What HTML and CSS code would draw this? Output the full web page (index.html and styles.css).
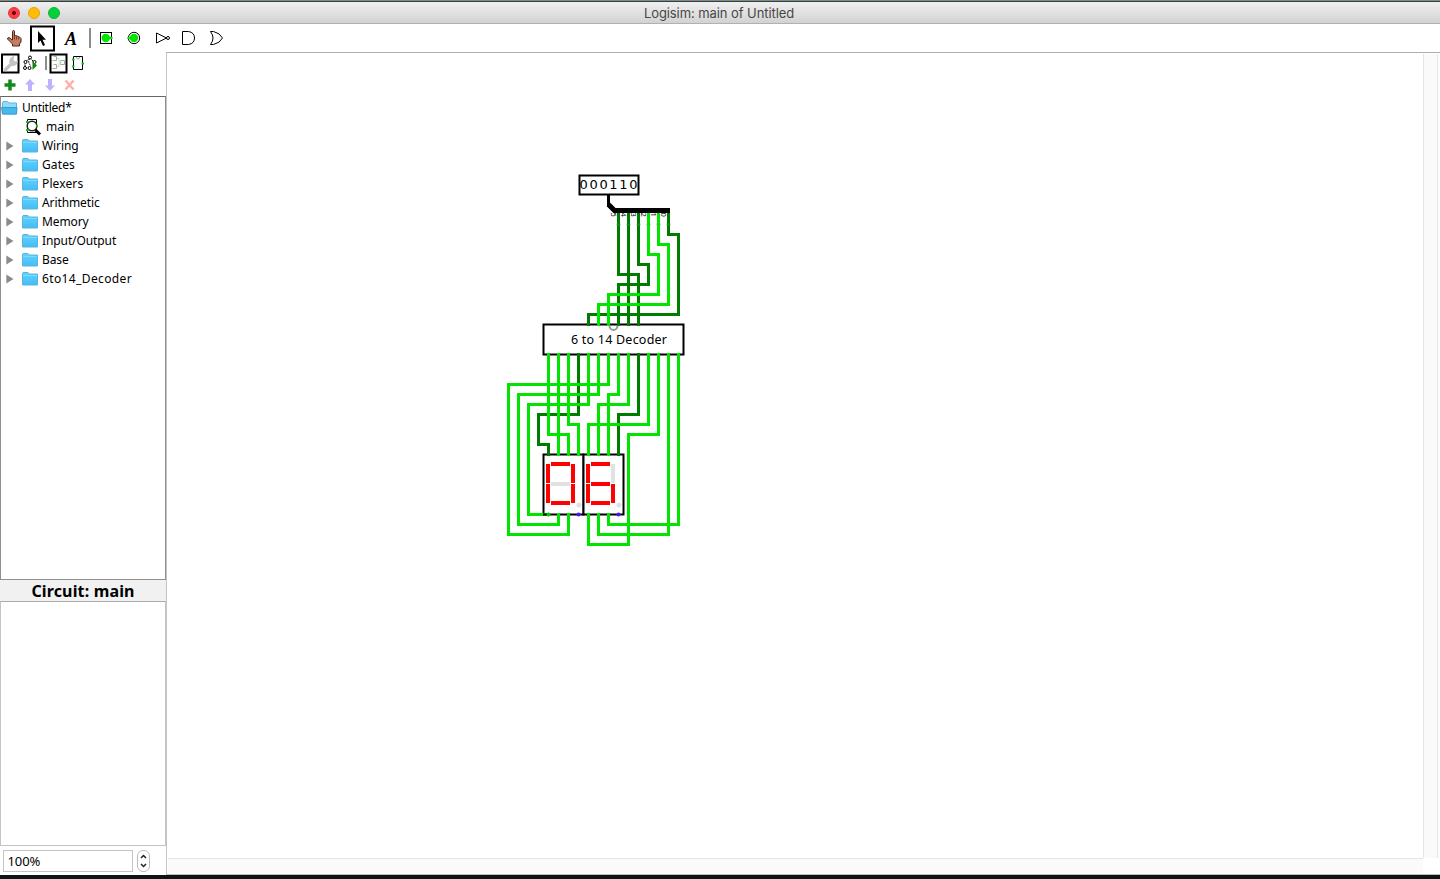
FILE: index.html
```html
<!DOCTYPE html>
<html lang="en">
<head>
<meta charset="utf-8">
<title>Logisim: main of Untitled</title>
<link rel="stylesheet" href="styles.css">
</head>
<body>
<svg class="defs" width="0" height="0">
  <defs>
    <linearGradient id="blue" x1="0" y1="0" x2="0" y2="1"><stop offset="0" stop-color="#62d2ff"/><stop offset="1" stop-color="#43bdf5"/></linearGradient>
    <symbol id="folder" viewBox="0 0 16 14"><path d="M.5 13V1.500l.5-1h5l1.500 1.500H15.500V13z" fill="url(#blue)" stroke="#5cb4dc"/><path d="M1 3.500h14" stroke="#7bdcff"/></symbol>
    <symbol id="tri" viewBox="0 0 8 10"><path d="M.3.500L7.500 5 .3 9.500z" fill="#8b8b8b"/></symbol>
  </defs>
</svg>
<header class="titlebar">
  <div class="lights"><i class="light red"></i><i class="light yellow"></i><i class="light green"></i></div>
  <h1 class="title"><span>Logisim: main of Untitled</span></h1>
</header>
<nav class="toolbar">
  <svg width="240" height="28" viewBox="0 24 240 28">
    <path d="M12.500 40V31.500q0-1 1-1t1 1V36l1-.5 1.500.5 1 .5 1.500.5 1.500 1.500v3.500l-1.500 2v2h-7v-2l-2.500-2.500-2.500-2.500q0-1.500 1.500-1.500z" fill="#c87d62" stroke="#4a261d"/>
    <path d="M14.500 36v3.500M16.500 36.500v3M18.500 37.500v2" stroke="#713e30"/>
    <rect x="31" y="26.500" width="23" height="24" fill="#fff" stroke="#000" stroke-width="2"/>
    <path d="M38 31V43l2.500-2.500 2.500 5.500 2-1-2.500-5.200H46z" fill="#000"/>
    <text class="letter" x="65" y="45">A</text>
    <path d="M90 28v20" stroke="#8c8c8c" stroke-width="2"/>
    <rect x="100.500" y="32.500" width="11" height="11" fill="#fff" stroke="#000"/>
    <circle cx="105.700" cy="38" r="4.200" fill="#00e600"/><path d="M106 38h5.500" stroke="#00e600" stroke-width="2.500" stroke-linecap="round"/>
    <circle cx="134" cy="38" r="5.700" fill="#fff" stroke="#000"/>
    <circle cx="134" cy="38" r="4.200" fill="#00e600"/><path d="M128.500 38h4" stroke="#00e600" stroke-width="2.500" stroke-linecap="round"/>
    <g fill="none" stroke="#000"><path d="M156.500 33v10l10-5z"/><circle cx="168" cy="38" r="1.500"/>
    <path d="M182.500 31.500h6q6 1 6 6.500t-6 6.500h-6z"/>
    <path d="M210.500 31.500q5 6.500 0 13h3q6.500-1.500 9-6.500-2.500-5-9-6.500z"/></g>
  </svg>
</nav>
<main class="workspace">
  <aside class="sidebar">
    <svg class="tools" width="166" height="44" viewBox="0 52 166 44">
      <rect x="2" y="54.500" width="16.500" height="18" fill="#fff" stroke="#000" stroke-width="2"/>
      <path d="M3.500 69l6-5.500q-1.500-5.500 5-8l-1.200 4 1.800 2 3-1q-1 6-6.500 5.500l-5.500 5.500q-2.500 0-2.600-2.500z" fill="#c3c3c3"/>
      <path d="M30 57.500l-5 5v6M30 58l5 5M30 58q-3 4 1 8" fill="none" stroke="#000" stroke-dasharray="2 1"/>
      <g fill="#fff" stroke="#000"><circle cx="30" cy="57.500" r="1.500"/><circle cx="25.500" cy="62" r="1.500"/><circle cx="34.500" cy="62" r="1.500"/><circle cx="25" cy="68" r="1.500"/><circle cx="29.500" cy="68" r="1.500"/></g>
      <path d="M32.500 61v9l4.500-4.500z" fill="#148514"/>
      <path d="M46 56v14" stroke="#8c8c8c" stroke-width="2"/>
      <rect x="50.500" y="54.500" width="16" height="18" fill="#fff" stroke="#000" stroke-width="2"/>
      <g fill="none" stroke="#a8a8a8"><path d="M53.500 56.500h3v4h-4M53.500 64.500h3v4h-4M60.500 60.500h4v4h-4z"/></g><path d="M57 58.500h2v3h2M57 66.500h2v-3h2" stroke="#b7edb7" fill="none"/>
      <path d="M73.500 56.500h9v13h-9z" fill="#fff" stroke="#000"/><path d="M76 57q2 4 4 0" stroke="#999" fill="none"/>
      <path d="M72 59.500h2.500M72 66.500h2.500M81.500 63.500h2.500" stroke="#00d000" stroke-width="2"/>
      <path d="M10 79.500v11M4.500 85h11" stroke="#108c18" stroke-width="3.500"/>
      <path d="M30 79l5 5.500h-3V91h-4v-6.500h-3zM50 91l-5-5.500h3V79h4v6.500h3z" fill="#bfb1fb"/>
      <path d="M65.500 80.500l8 9M73.500 80.500l-8 9" stroke="#ffb0ac" stroke-width="2.600"/>
    </svg>
    <ul class="tree">
      <li class="row root"><svg width="17" height="14" viewBox="0 0 17 14"><path d="M1.500 13V1.500l.5-1h4.500l1.500 1.500H15.500V13z" fill="#8fdcfb" stroke="#5cb4dc"/><path d="M.5 6.500h15.500l-.5 6.500H1.500z" fill="#45b9ec" stroke="#3a9cd0"/></svg><span class="t-root">Untitled*</span></li>
      <li class="row leaf"><svg width="17" height="18" viewBox="0 0 17 18"><path d="M2.500 1.500h9v13h-9z" fill="#fff" stroke="#000"/><circle cx="7" cy="8" r="4.800" fill="#fff" stroke="#222" stroke-width="1.500"/><path d="M1 4h2.500M1 12h2.500M11 8h2" stroke="#00d000" stroke-width="2"/><path d="M10.500 12l4.500 4.500" stroke="#000" stroke-width="3"/></svg><span class="t-main">main</span></li>
      <li class="row"><svg width="8" height="10"><use href="#tri"/></svg><svg class="f" width="16" height="14"><use href="#folder"/></svg><span>Wiring</span></li>
      <li class="row"><svg width="8" height="10"><use href="#tri"/></svg><svg class="f" width="16" height="14"><use href="#folder"/></svg><span class="t-wide">Gates</span></li>
      <li class="row"><svg width="8" height="10"><use href="#tri"/></svg><svg class="f" width="16" height="14"><use href="#folder"/></svg><span class="t-wide">Plexers</span></li>
      <li class="row"><svg width="8" height="10"><use href="#tri"/></svg><svg class="f" width="16" height="14"><use href="#folder"/></svg><span>Arithmetic</span></li>
      <li class="row"><svg width="8" height="10"><use href="#tri"/></svg><svg class="f" width="16" height="14"><use href="#folder"/></svg><span>Memory</span></li>
      <li class="row"><svg width="8" height="10"><use href="#tri"/></svg><svg class="f" width="16" height="14"><use href="#folder"/></svg><span>Input/Output</span></li>
      <li class="row"><svg width="8" height="10"><use href="#tri"/></svg><svg class="f" width="16" height="14"><use href="#folder"/></svg><span>Base</span></li>
      <li class="row"><svg width="8" height="10"><use href="#tri"/></svg><svg class="f" width="16" height="14"><use href="#folder"/></svg><span class="t-decoder">6to14_Decoder</span></li>
    </ul>
    <h2 class="attr-title"><span>Circuit: main</span></h2>
    <div class="attrs"></div>
    <div class="zoom">
      <div class="zoom-value">100%</div>
      <svg width="14" height="22" viewBox="0 0 14 22"><rect x=".5" y=".5" width="12" height="21" rx="5.500" fill="#fff" stroke="#bcbcbc"/><path d="M4 8l2.500-2.500L9 8M4 14l2.500 2.500L9 14" fill="none" stroke="#222" stroke-width="1.500"/></svg>
    </div>
  </aside>
  <section class="canvas">
    <div class="sheet">
      <svg width="1256" height="805" viewBox="167 53 1256 805">
        <g class="box"><rect x="579.500" y="175.500" width="59" height="19"/><rect x="543.500" y="324.500" width="140" height="30"/><rect x="543.500" y="454.500" width="40" height="60"/><rect x="583.500" y="454.500" width="40" height="60"/></g>
        <path d="M609.500 325.500a4 4.500 0 0 0 8 0" fill="none" stroke="#999" stroke-width="2"/>
        <g class="wire dark">
          <path d="M618.500 212V274.500H638.500V326"/><path d="M628.500 212V326"/><path d="M638.500 212V264.500H648.500V284.500H618.500V326"/><path d="M668.500 212V234.500H678.500V314.500H588.500V326"/>
          <path d="M578.500 353V414.500H538.500V444.500H548.500V456"/><path d="M638.500 353V414.500H618.500V456"/>
        </g>
        <g class="wire lit">
          <path d="M648.500 212V254.500H658.500V294.500H608.500V326"/><path d="M658.500 212V244.500H668.500V304.500H598.500V326"/>
          <path d="M548.500 353V434.500H568.500V456"/><path d="M558.500 353V456"/><path d="M568.500 353V424.500H578.500V456"/>
          <path d="M588.500 353V404.500H528.500V514.500H550"/><path d="M598.500 353V394.500H518.500V524.500H558.500V513"/><path d="M608.500 353V384.500H508.500V534.500H568.500V513"/>
          <path d="M618.500 353V394.500H608.500V456"/><path d="M628.500 353V404.500H598.500V456"/><path d="M648.500 353V424.500H588.500V456"/>
          <path d="M658.500 353V434.500H628.500V544.500H588.500V513"/><path d="M668.500 353V534.500H598.500V513"/><path d="M678.500 353V524.500H608.500V513"/>
        </g>
        <path class="ports" d="M616 224.500h5M626 224.500h5M636 224.500h5M646 224.500h5M656 224.500h5M666 224.500h5"/>
        <path d="M543 514.500h6" stroke="#000" stroke-width="2"/><circle cx="548.500" cy="514.500" r="2" fill="#00c800"/>
        <path d="M608.500 194v11.500l5.500 5" fill="none" stroke="#000" stroke-width="3"/><path d="M608.500 204.500l6 6H670" fill="none" stroke="#000" stroke-width="5"/>
        <g class="off"><path d="M551 484h19M613 464v19"/><circle cx="579" cy="505" r="2.500"/><circle cx="619" cy="505" r="2.500"/></g>
        <path class="seg" d="M551 464h19M551 503h19M548 464v19M573 464v19M548 484v19M573 484v19M591 464h19M591 484h19M591 503h19M588 464v19M588 484v19M613 484v19"/>
        <circle cx="578.500" cy="514.500" r="2" fill="#4b14ff"/><circle cx="618.500" cy="514.500" r="2" fill="#4b14ff"/>
        <text class="pin" x="579.500" y="189" textLength="58">000110</text>
        <text class="chip" x="571" y="344" textLength="96">6 to 14 Decoder</text>
        <g class="bits"><text transform="translate(611 212.500) rotate(90)">5</text><text transform="translate(621 212.500) rotate(90)">4</text><text transform="translate(631 212.500) rotate(90)">3</text><text transform="translate(641 212.500) rotate(90)">2</text><text transform="translate(651 212.500) rotate(90)">1</text><text transform="translate(661 212.500) rotate(90)">0</text></g>
      </svg>
    </div>
    <div class="vscroll"></div>
    <div class="hscroll"></div>
  </section>
</main>
<footer class="desktop"></footer>
</body>
</html>
```
FILE: styles.css
```css
* { box-sizing: border-box; }
body { margin: 0; height: 879px; overflow: hidden; display: flex; flex-direction: column; background: #fff; color: #000; font: 12px/19px "Noto Sans", "Open Sans", sans-serif; }
svg { display: block; flex: none; }
.defs { height: 0; }
.titlebar { height: 24px; flex: none; display: grid; grid-template-columns: 66px 1fr 66px; align-items: center; padding-top: 2px; border-top: 1px solid #7b8e8c; border-bottom: 1px solid #b1b1b1; background: linear-gradient(#3a3f3d 0 1px, #f0f0f0 1px, #d2d2d2); }
.lights { display: flex; gap: 8px; padding-left: 8px; }
.light { width: 12px; height: 12px; border-radius: 50%; }
.red { background: radial-gradient(circle, #75000b 0 1.7px, #fc3e47 2.3px); border: 1px solid #e2353d; }
.yellow { background: #ffbd05; border: 1px solid #e3a506; }
.green { background: #05cf3b; border: 1px solid #0bb931; }
.title { margin: 0; text-align: center; font: 13px/18px Inter, Roboto, sans-serif; color: #474747; letter-spacing: -0.08px; }
.title span { padding-right: 2px; }
.toolbar { height: 28px; flex: none; }
.letter { font: italic bold 18px "Liberation Serif", serif; }
.workspace { flex: none; height: 823px; display: flex; }
.sidebar { width: 166px; flex: none; display: flex; flex-direction: column; }
.tree { list-style: none; margin: 0; padding: 1px 0 0; height: 484px; border: 1px solid #8f8f8f; border-top-color: #666; }
.row { height: 19px; display: flex; align-items: center; padding-left: 5px; white-space: nowrap; letter-spacing: -0.1px; }
.row .f { margin: 0 4px 0 8px; }
.row.root { padding-left: 0; gap: 4px; }
.row.leaf { padding-left: 24px; gap: 4px; }
.t-root { letter-spacing: -0.25px; }
.t-main { letter-spacing: 0; }
.t-wide { letter-spacing: 0.12px; }
.t-decoder { letter-spacing: 0.38px; }
.attr-title { margin: 0; height: 21px; background: #f1f1f1; text-align: center; font: bold 16px/22px "Noto Sans", sans-serif; letter-spacing: 0.15px; }
.attrs { height: 245px; border: 1px solid #c4c4c4; border-top-color: #aaa; }
.zoom { display: flex; align-items: center; gap: 4px; padding: 4px 3px 0; }
.zoom-value { width: 130px; height: 22px; border: 1px solid #c4c4c4; padding-left: 3.5px; font-size: 13px; line-height: 20px; letter-spacing: -0.1px; }
.canvas { flex: 1; display: grid; grid-template: 805px 17px / 1256px 17px; border-top: 1px solid #adadad; border-left: 1px solid #c4c4c4; border-bottom: 1px solid #bbb; }
.vscroll { background: #fafafa; border-left: 1px solid #e5e5e5; border-right: 1px solid #e5e5e5; width: 15px; margin-top: 1px; }
.hscroll { background: #fafafa; border-top: 1px solid #e5e5e5; height: 15px; margin-left: 1px; }
.desktop { height: 4px; flex: none; background: #0a1514; }
.box { fill: #fff; stroke: #000; stroke-width: 2; }
.wire { fill: none; stroke-width: 3; }
.dark { stroke: #007d00; }
.lit { stroke: #00e400; }
.ports { stroke: #4ca44c; stroke-width: 2; stroke-opacity: .35; }
.seg { stroke: #f00; stroke-width: 4; }
.off { fill: #e1e1e1; stroke: none; }
.off path { stroke: #e1e1e1; stroke-width: 4; }
.pin { font: 13px "DejaVu Sans", sans-serif; }
.chip { font: 12.5px "Noto Sans", sans-serif; }
.bits { font: 7.5px "Noto Sans", sans-serif; }
```
